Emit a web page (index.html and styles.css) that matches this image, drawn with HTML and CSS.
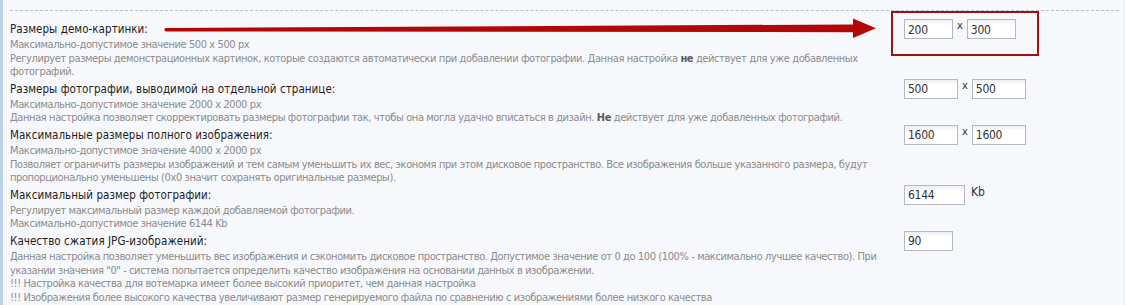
FILE: index.html
```html
<!DOCTYPE html>
<html lang="ru">
<head>
  <meta charset="UTF-8">
  <title>Настройки фотогалереи</title>
  <link rel="stylesheet" href="styles.css">
</head>
<body>
  <div class="panel">
    <div class="sep"></div>

    <div class="setting">
      <div class="info">
        <div class="title">Размеры демо-картинки:</div>
        <div class="desc">
          Максимально-допустимое значение 500 x 500 px<br>
          Регулирует размеры демонстрационных картинок, которые создаются автоматически при добавлении фотографии. Данная настройка <b>не</b> действует для уже добавленных<br>
          фотографий.
        </div>
      </div>
      <div class="control">
        <input class="num" type="text" value="200"> <span class="by">x</span> <input class="num" type="text" value="300">
      </div>
    </div>

    <div class="setting">
      <div class="info">
        <div class="title">Размеры фотографии, выводимой на отдельной странице:</div>
        <div class="desc">
          Максимально-допустимое значение 2000 x 2000 px<br>
          Данная настройка позволяет скорректировать размеры фотографии так, чтобы она могла удачно вписаться в дизайн. <b>Не</b> действует для уже добавленных фотографий.
        </div>
      </div>
      <div class="control">
        <input class="num wide" type="text" value="500"> <span class="by">x</span> <input class="num wide" type="text" value="500">
      </div>
    </div>

    <div class="setting">
      <div class="info">
        <div class="title">Максимальные размеры полного изображения:</div>
        <div class="desc">
          Максимально-допустимое значение 4000 x 2000 px<br>
          Позволяет ограничить размеры изображений и тем самым уменьшить их вес, экономя при этом дисковое пространство. Все изображения больше указанного размера, будут<br>
          пропорционально уменьшены (0x0 значит сохранять оригинальные размеры).
        </div>
      </div>
      <div class="control">
        <input class="num wide" type="text" value="1600"> <span class="by">x</span> <input class="num wide" type="text" value="1600">
      </div>
    </div>

    <div class="setting">
      <div class="info">
        <div class="title">Максимальный размер фотографии:</div>
        <div class="desc">
          Регулирует максимальный размер каждой добавляемой фотографии.<br>
          Максимально-допустимое значение 6144 Kb
        </div>
      </div>
      <div class="control">
        <input class="num kb" type="text" value="6144"> <span class="unit">Kb</span>
      </div>
    </div>

    <div class="setting">
      <div class="info">
        <div class="title">Качество сжатия JPG-изображений:</div>
        <div class="desc">
          Данная настройка позволяет уменьшить вес изображения и сэкономить дисковое пространство. Допустимое значение от 0 до 100 (100% - максимально лучшее качество). При<br>
          указании значения "0" - система попытается определить качество изображения на основании данных в изображении.<br>
          !!! Настройка качества для вотемарка имеет более высокий приоритет, чем данная настройка<br>
          !!! Изображения более высокого качества увеличивают размер генерируемого файла по сравнению с изображениями более низкого качества
        </div>
      </div>
      <div class="control">
        <input class="num" type="text" value="90">
      </div>
    </div>

    <!-- пометки поверх скриншота -->
    <svg class="arrow" width="1125" height="60" viewBox="0 0 1125 60">
      <path d="M166 28 L853 24.4 L853 18.5 L876 28.2 L853 38 L853 32.2 L166 31.4 Q162.5 29.7 166 28 Z" fill="#b30606"/>
    </svg>
    <div class="mark"></div>
  </div>
</body>
</html>
```

FILE: styles.css
```css
* { box-sizing: border-box; }
html, body {
  margin: 0;
  height: 100%;
}
body {
  background: #f7f8fc;
  font-family: "DejaVu Sans Condensed", "Liberation Sans", sans-serif;
  color: #222;
}
.panel {
  position: relative;
  min-height: 100%;
  border-left: 3px solid #bcd0ea;
  border-right: 1px solid #e4e8f0;
  padding: 0 5px 0 7px;
}
.sep {
  height: 11px;
  border-bottom: 1px dashed #b7bfcd;
  margin-bottom: 10px;
}
.setting {
  display: flex;
  align-items: flex-start;
  padding-bottom: 2px;
}
.info {
  width: 894px;
  flex: none;
}
.title {
  font-size: 11.5px;
  letter-spacing: 0.05px;
  line-height: 16px;
  color: #1e1e1e;
}
.desc {
  font-size: 11px;
  letter-spacing: -0.4px;
  line-height: 13.6px;
  padding-top: 1px;
  color: #8c8c8c;
  white-space: nowrap;
}
.desc b {
  color: #5c5c5c;
}
.control {
  display: flex;
  align-items: flex-start;
  gap: 3px;
  margin-top: -2px;
}
.num {
  width: 49px;
  height: 20px;
  border: 1px solid #b4b8c0;
  background: linear-gradient(#eceef1, #fff 5px);
  font-family: inherit;
  font-size: 12px;
  letter-spacing: -0.3px;
  color: #333;
  padding: 1px 3px 0;
  margin: 0;
  outline: none;
}
.num.wide {
  width: 54px;
}
.num.kb {
  width: 61px;
}
.by {
  font-size: 11px;
  color: #333;
  line-height: 14px;
  margin: 0 1px;
}
.unit {
  font-size: 12px;
  color: #333;
  line-height: 14px;
  margin-left: 3px;
}
.arrow {
  position: absolute;
  left: -3px;
  top: 0;
  pointer-events: none;
}
.mark {
  position: absolute;
  left: 888px;
  top: 11px;
  width: 148px;
  height: 45px;
  border: 2px solid #a30e0e;
  pointer-events: none;
}
```
